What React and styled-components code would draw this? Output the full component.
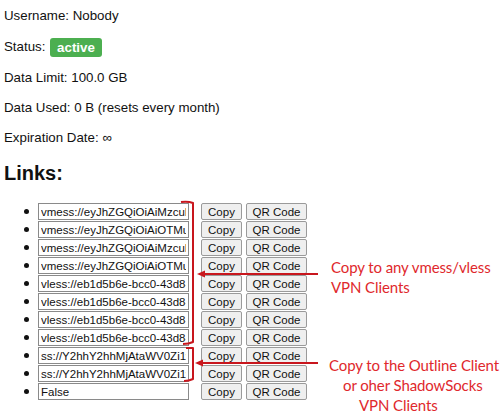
import * as React from 'react';
import styled, { createGlobalStyle } from 'styled-components';

const links = [
  'vmess://eyJhZGQiOiAiMzcuMTUyLjE4Ni4xMjUiLCAiYWlkIjogIjAifQ==',
  'vmess://eyJhZGQiOiAiOTMuMTE1LjI1LjE0MiIsICJhaWQiOiAiMCJ9',
  'vmess://eyJhZGQiOiAiMzcuMTUyLjE4Ni4xMjUiLCAiaG9zdCI6ICIifQ==',
  'vmess://eyJhZGQiOiAiOTMuMTE1LjI1LjE0MiIsICJob3N0IjogIiJ9',
  'vless://eb1d5b6e-bcc0-43d8-9a3c-5f7e2d1b8a40@37.152.186.125:443',
  'vless://eb1d5b6e-bcc0-43d8-9a3c-5f7e2d1b8a40@93.115.25.142:443',
  'vless://eb1d5b6e-bcc0-43d8-9a3c-5f7e2d1b8a40@37.152.186.125:80',
  'vless://eb1d5b6e-bcc0-43d8-9a3c-5f7e2d1b8a40@93.115.25.142:80',
  'ss://Y2hhY2hhMjAtaWV0Zi1wb2x5MTMwNTpwYXNzd29yZA@37.152.186.125:1080',
  'ss://Y2hhY2hhMjAtaWV0Zi1wb2x5MTMwNTpwYXNzd29yZA@93.115.25.142:1080',
  'False',
];

const App = () => {
  return (
    <Page>
      <GlobalStyle />
      <Info>
        <Line>Username: Nobody</Line>
        <Line $tall>
          Status:&nbsp;<Badge>active</Badge>
        </Line>
        <Line>Data Limit: 100.0 GB</Line>
        <Line>Data Used: 0 B (resets every month)</Line>
        <Line>Expiration Date: ∞</Line>
      </Info>
      <Heading>Links:</Heading>
      <LinkList>
        {links.map((link, i) => (
          <LinkRow key={i}>
            <LinkInput readOnly value={link} />
            <Button $width={41} $gap={12}>Copy</Button>
            <Button $width={61} $gap={4}>QR Code</Button>
          </LinkRow>
        ))}
      </LinkList>

      <Marks width="502" height="420" viewBox="0 0 502 420">
        <g fill="none" stroke="#c8161d" strokeWidth="2" strokeLinejoin="round">
          <path d="M181 202 Q188 201 193 203 L193 342 Q189 344 183 344" />
          <path d="M186 348 L193 348 L193 379 Q189 381 184 381" />
          <path d="M203 274 L318 274" />
          <path d="M201 363 L318 363" />
        </g>
        <g fill="#c8161d">
          <path d="M197 274 L205 270.5 L205 277.5 Z" />
          <path d="M195 363 L203 359.5 L203 366.5 Z" />
        </g>
      </Marks>

      <Note $left={331} $top={257}>
        <NoteLine>Copy to any vmess/vless</NoteLine>
        <NoteLine>VPN Clients</NoteLine>
      </Note>
      <Note $left={329} $top={355}>
        <NoteLine>Copy to the Outline Client</NoteLine>
        <NoteLine $indent={14}>or oher ShadowSocks</NoteLine>
        <NoteLine $indent={30}>VPN Clients</NoteLine>
      </Note>
    </Page>
  );
};

const GlobalStyle = createGlobalStyle`
  html, body {
    margin: 0;
    padding: 0;
    background: #fff;
  }
`;

const Page = styled.div`
  position: relative;
  width: 502px;
  height: 420px;
  overflow: hidden;
  padding: 8px 0 0 4px;
  box-sizing: border-box;
  font-family: Arial, 'Liberation Sans', sans-serif;
  font-size: 13.3px;
  color: #111;
`;

const Info = styled.div`
  display: flex;
  flex-direction: column;
  gap: 14px;
`;

const Line = styled.p`
  margin: 0;
  display: flex;
  align-items: center;
  height: ${(p) => (p.$tall ? '18px' : '16px')};
  line-height: 16px;
`;

const Badge = styled.span`
  display: inline-block;
  background: #4caf50;
  color: #fff;
  font-weight: 700;
  height: 19px;
  line-height: 19px;
  padding: 0 7px;
  border-radius: 3px;
  margin-left: 1px;
`;

const Heading = styled.h2`
  margin: 16px 0 0;
  font-size: 20px;
  line-height: 23px;
  font-weight: 700;
`;

const LinkList = styled.ul`
  list-style: none;
  margin: 18px 0 0;
  padding: 0 0 0 20px;
  display: flex;
  flex-direction: column;
  gap: 1px;
`;

const LinkRow = styled.li`
  display: flex;
  align-items: center;
  height: 17px;

  &::before {
    content: '';
    width: 5px;
    height: 5px;
    border-radius: 50%;
    background: #111;
    margin-right: 9px;
  }
`;

const LinkInput = styled.input`
  box-sizing: border-box;
  width: 151px;
  height: 17px;
  padding: 0 2px;
  border: 1px solid #8a8a8a;
  border-radius: 0;
  font-family: Arial, 'Liberation Sans', sans-serif;
  font-size: 11.5px;
  color: #111;
  background: #fff;
  outline: none;
`;

const Button = styled.button`
  box-sizing: border-box;
  width: ${(p) => p.$width}px;
  height: 17px;
  margin-left: ${(p) => p.$gap}px;
  padding: 0;
  border: 1px solid #9a9a9a;
  border-radius: 2px;
  background: #efefef;
  font-family: Arial, 'Liberation Sans', sans-serif;
  font-size: 11.5px;
  color: #111;
`;

const Marks = styled.svg`
  position: absolute;
  left: 0;
  top: 0;
  pointer-events: none;
`;

const Note = styled.div`
  position: absolute;
  left: ${(p) => p.$left}px;
  top: ${(p) => p.$top}px;
  display: flex;
  flex-direction: column;
  font-family: Lato, 'Open Sans', sans-serif;
  font-size: 15px;
  line-height: 20px;
  letter-spacing: -0.1px;
  color: #e0282c;
  white-space: nowrap;
`;

const NoteLine = styled.span`
  padding-left: ${(p) => p.$indent || 0}px;
`;

export default App;
